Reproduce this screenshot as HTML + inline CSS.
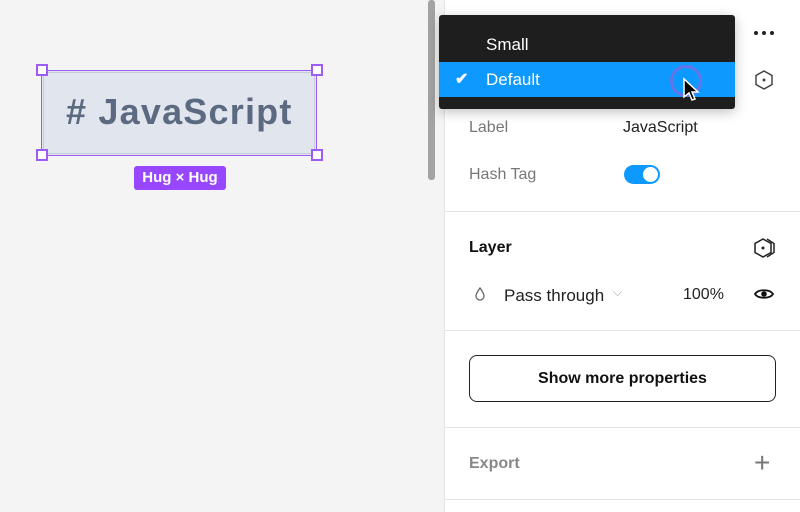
<!DOCTYPE html>
<html><head><style>
*{margin:0;padding:0;box-sizing:border-box}
body{width:800px;height:512px;overflow:hidden;background:#f4f4f4;font-family:"Liberation Sans",sans-serif;position:relative}
.a{position:absolute}
.h{position:absolute;width:12px;height:12px;background:#fff;border:2px solid #9d5cf5}
.t{font-size:16px;color:#222}
.div{position:absolute;left:445px;width:355px;height:1px;background:#e4e4e4}
</style></head><body>
<div class="a" style="left:428px;top:0;width:7px;height:180px;background:#a3a3a3;border-radius:3px"></div>
<div class="a" style="left:444px;top:0;width:356px;height:512px;background:#fff;border-left:1px solid #e6e6e6"></div>

<div class="a" style="left:41px;top:70px;width:276px;height:86px;background:#e1e5ee;border:1.5px solid #9d5cf5"></div>
<div class="a" style="left:43px;top:72px;width:272px;height:82px;border:1px solid #c6ccd8"></div>
<div class="a" style="left:66px;top:91px;font-size:36px;font-weight:bold;color:#5b6a80;letter-spacing:1.2px"># JavaScript</div>
<div class="h" style="left:36px;top:64px"></div><div class="h" style="left:311px;top:64px"></div>
<div class="h" style="left:36px;top:149px"></div><div class="h" style="left:311px;top:149px"></div>
<div class="a" style="left:134px;top:166px;width:92px;height:24px;background:#9747ff;border-radius:3px;color:#fff;font-size:15px;font-weight:bold;text-align:center;line-height:24px">Hug × Hug</div>

<div class="a" style="left:754px;top:31px;width:4px;height:4px;border-radius:50%;background:#222"></div>
<div class="a" style="left:762px;top:31px;width:4px;height:4px;border-radius:50%;background:#222"></div>
<div class="a" style="left:770px;top:31px;width:4px;height:4px;border-radius:50%;background:#222"></div>
<svg class="a" style="left:754px;top:69px" width="20" height="22" viewBox="0 0 20 22"><path d="M10 2l8 4.5v9L10 20l-8-4.5v-9z" fill="none" stroke="#444" stroke-width="1.5"/><circle cx="10" cy="11" r="1.5" fill="#444"/></svg>

<div class="a t" style="left:469px;top:119px;color:#777">Label</div>
<div class="a t" style="left:623px;top:119px">JavaScript</div>
<div class="a t" style="left:469px;top:166px;color:#777">Hash Tag</div>
<div class="a" style="left:624px;top:165px;width:36px;height:19px;border-radius:10px;background:#0d99ff"><div class="a" style="left:19px;top:2px;width:15px;height:15px;border-radius:50%;background:#fff"></div></div>
<div class="div" style="top:211px"></div>

<div class="a t" style="left:469px;top:239px;font-weight:bold;color:#111">Layer</div>
<svg class="a" style="left:753px;top:237px" width="24" height="22" viewBox="0 0 24 22"><path d="M10 2l8 4.5v9L10 20l-8-4.5v-9z" fill="none" stroke="#222" stroke-width="1.5"/><path d="M14 2l7 4.5v9L14 20" fill="none" stroke="#222" stroke-width="1.5"/><circle cx="10" cy="11" r="1.5" fill="#222"/></svg>
<svg class="a" style="left:474px;top:286px" width="12" height="16" viewBox="0 0 12 16"><path d="M6 2C4 5 2 7.5 2 10a4 4 0 008 0c0-2.5-2-5-4-8z" fill="none" stroke="#666" stroke-width="1.3"/></svg>
<div class="a t" style="left:504px;top:286px;font-size:17px">Pass through</div>
<div class="a" style="left:613px;top:285px;color:#aaa;font-size:12px">⌵</div>
<div class="a t" style="left:683px;top:286px">100%</div>
<svg class="a" style="left:753px;top:285px" width="22" height="18" viewBox="0 0 22 18"><path d="M2 9c3-5 15-5 18 0c-3 5-15 5-18 0z" fill="none" stroke="#111" stroke-width="1.8"/><circle cx="11" cy="9" r="2.8" fill="#111"/></svg>
<div class="div" style="top:330px"></div>

<div class="a" style="left:469px;top:355px;width:307px;height:47px;border:1.3px solid #222;border-radius:8px;text-align:center;line-height:45px;font-size:16px;color:#111;font-weight:bold">Show more properties</div>
<div class="div" style="top:427px"></div>
<div class="a t" style="left:469px;top:455px;font-weight:bold;color:#888">Export</div>
<div class="a" style="left:754px;top:446px;font-size:28px;color:#777;font-weight:200;line-height:34px">+</div>
<div class="div" style="top:499px"></div>

<div class="a" style="left:439px;top:15px;width:296px;height:94px;background:#1e1e1e;border-radius:3px;box-shadow:0 3px 12px rgba(0,0,0,.25)"></div>
<div class="a" style="left:486px;top:35px;color:#fff;font-size:17px">Small</div>
<div class="a" style="left:439px;top:62px;width:296px;height:35px;background:#0d99ff"></div>
<div class="a" style="left:455px;top:69px;color:#fff;font-size:16px;font-weight:bold">✔</div>
<div class="a" style="left:486px;top:70px;color:#fff;font-size:17px">Default</div>
<div class="a" style="left:670px;top:65px;width:32px;height:32px;border-radius:50%;border:3px solid #7b6be0;opacity:.8"></div>
<svg class="a" style="left:682px;top:77px" width="18" height="26" viewBox="0 0 18 26"><path d="M2 2v18l5-4 3 7 3-1-3-7h6z" fill="#000" stroke="#fff" stroke-width="1.5"/></svg>
</body></html>
